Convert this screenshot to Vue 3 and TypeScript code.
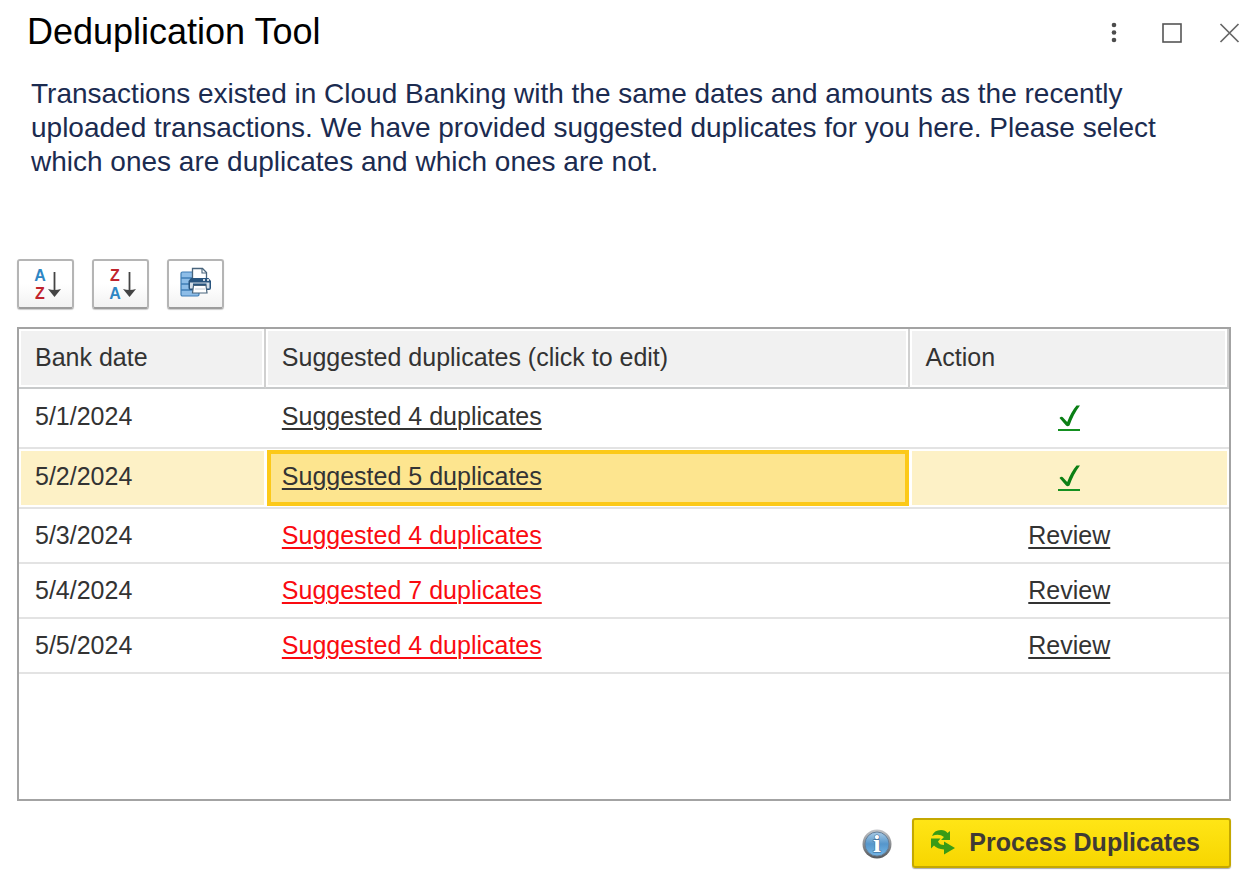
<script setup lang="ts">
import { ref } from 'vue'

interface Row {
  date: string
  count: number
  reviewed: boolean
}

const rows = ref<Row[]>([
  { date: '5/1/2024', count: 4, reviewed: true },
  { date: '5/2/2024', count: 5, reviewed: true },
  { date: '5/3/2024', count: 4, reviewed: false },
  { date: '5/4/2024', count: 7, reviewed: false },
  { date: '5/5/2024', count: 4, reviewed: false },
])
const selected = ref('5/2/2024')
</script>

<template>
  <main class="dialog">
    <header class="titlebar">
      <h1>Deduplication Tool</h1>
      <div class="window-controls">
        <button type="button" aria-label="More">
          <svg width="22" height="24" viewBox="0 0 22 24" fill="#4c4c4c">
            <circle cx="11" cy="5" r="2.3" /><circle cx="11" cy="12.500" r="2.3" /><circle cx="11" cy="20" r="2.3" />
          </svg>
        </button>
        <button type="button" aria-label="Maximize">
          <svg width="22" height="24" viewBox="0 0 22 24" fill="none" stroke="#555" stroke-width="1.6">
            <rect x="2" y="4" width="18" height="18" />
          </svg>
        </button>
        <button type="button" aria-label="Close">
          <svg width="22" height="24" viewBox="0 0 22 24" fill="none" stroke="#666" stroke-width="1.7">
            <path d="M1.500 4L19.500 22M19.500 4L1.500 22" />
          </svg>
        </button>
      </div>
    </header>

    <p class="intro">
      Transactions existed in Cloud Banking with the same dates and amounts as the recently
      uploaded transactions. We have provided suggested duplicates for you here. Please select
      which ones are duplicates and which ones are not.
    </p>

    <div class="toolbar">
      <button type="button" aria-label="Sort ascending">
        <svg width="34" height="44" viewBox="0 -4 34 44">
          <text class="letter blue" x="11" y="15" text-anchor="middle">A</text>
          <text class="letter red" x="11" y="33" text-anchor="middle">Z</text>
          <path d="M25.500 6V25" stroke="#444" stroke-width="1.800" />
          <path d="M19 23Q25.500 25 32 23L25.500 31Z" fill="#444" />
        </svg>
      </button>
      <button type="button" aria-label="Sort descending">
        <svg width="34" height="44" viewBox="0 -4 34 44">
          <text class="letter red" x="11" y="15" text-anchor="middle">Z</text>
          <text class="letter blue" x="11" y="33" text-anchor="middle">A</text>
          <path d="M25.500 6V25" stroke="#444" stroke-width="1.800" />
          <path d="M19 23Q25.500 25 32 23L25.500 31Z" fill="#444" />
        </svg>
      </button>
      <button type="button" aria-label="Print list">
        <svg width="34" height="36" viewBox="0 0 34 36">
          <rect x="2" y="6" width="18" height="24" rx="1.500" fill="#8dbde8" stroke="#3f7db5" stroke-width="1.200" />
          <path d="M2 12H20M2 18H20M2 24H20" stroke="#3f7db5" stroke-width="1.600" />
          <path d="M13.500 14V2.500H23.500L27.500 6.500V14Z" fill="#fff" stroke="#48647c" stroke-width="1.300" />
          <path d="M23 2.500V7H27.500" fill="none" stroke="#48647c" stroke-width="1.100" />
          <path d="M12 12H29.500L32 15V22Q32 24 30 24H11.500Q9.500 24 9.500 22V15Z" fill="#28547e" />
          <path d="M11 16.500H30.500V22.500H11Z" fill="#d5dfe8" />
          <path d="M24 14H26M28 14H30" stroke="#fff" stroke-width="1.600" />
          <path d="M14 18.500H27.500" stroke="#28547e" stroke-width="2" />
          <path d="M14.500 19.500H27L28 27H13.500Z" fill="#fff" stroke="#48647c" stroke-width="1.200" />
          <path d="M16 23H26" stroke="#c5cdd4" stroke-width="1" />
        </svg>
      </button>
    </div>

    <section class="grid">
      <table>
        <colgroup>
          <col class="col-date"><col class="col-suggested"><col>
        </colgroup>
        <thead>
          <tr>
            <th scope="col">Bank date</th>
            <th scope="col">Suggested duplicates (click to edit)</th>
            <th scope="col">Action</th>
          </tr>
        </thead>
        <tbody>
          <tr
            v-for="row in rows"
            :key="row.date"
            :class="{ reviewed: row.reviewed, selected: row.date === selected }"
            @click="selected = row.date"
          >
            <td>{{ row.date }}</td>
            <td class="suggested">
              <a href="#" @click.prevent>Suggested {{ row.count }} duplicates</a>
            </td>
            <td class="action">
              <a v-if="row.reviewed" href="#" class="check" aria-label="Reviewed" @click.prevent>
                <svg width="22" height="22" viewBox="0 0 22 22" fill="#0b7f14">
                  <path d="M1.500 13Q3.500 10.500 5.500 13L9.200 17Q13 7 18.500 .5H22Q15.500 9 11.500 20.500Q9.500 22 8 20.500Z" />
                </svg>
              </a>
              <a v-else href="#" @click.prevent>Review</a>
            </td>
          </tr>
        </tbody>
      </table>
    </section>

    <footer class="footer">
      <button type="button" class="info" aria-label="Information">
        <svg width="30" height="32" viewBox="0 0 30 32">
          <defs>
            <linearGradient id="rim" x1="0" y1="0" x2="0" y2="1">
              <stop offset="0" stop-color="#c3c5c8" /><stop offset="1" stop-color="#55585c" />
            </linearGradient>
            <linearGradient id="face" x1="0" y1="0" x2="0" y2="1">
              <stop offset="0" stop-color="#a9cbe6" /><stop offset=".5" stop-color="#5596cb" /><stop offset="1" stop-color="#74b7e8" />
            </linearGradient>
          </defs>
          <circle cx="15" cy="17" r="14.500" fill="url(#rim)" />
          <circle cx="15" cy="17" r="12" fill="url(#face)" stroke="#66809a" />
          <text class="info-letter" x="15" y="25" text-anchor="middle">i</text>
        </svg>
      </button>
      <button type="button" class="process">
        <svg width="26" height="26" viewBox="0 0 26 26" fill="#389b16">
          <path d="M2 7Q4 1 11 1Q15.500 1 17.500 4L20 2V11H11L14 8Q9 4 2 7Z" />
          <path d="M1 9.500H10.500L8 12.500Q9.500 16 14 16V12.500L25 19L14 25.500V20.500Q7 20 4 16.500L1 19.500Z" />
        </svg>
        <span>Process Duplicates</span>
      </button>
    </footer>
  </main>
</template>

<style>
body {
  margin: 0;
  background: #fff;
}
</style>

<style scoped>
.dialog {
  box-sizing: border-box;
  display: flex;
  flex-direction: column;
  min-height: 100vh;
  padding: 8px 26px 9px 17px;
  font-family: "Liberation Sans", Arial, sans-serif;
  font-size: 25px;
  color: #333;
}
button {
  font: inherit;
  color: inherit;
  padding: 0;
  border: 0;
  background: none;
  cursor: pointer;
}
svg {
  display: block;
}
.titlebar {
  display: flex;
  justify-content: space-between;
  align-items: center;
  height: 48px;
  margin-right: -10px;
}
h1 {
  margin: 0 0 0 10px;
  font-size: 36px;
  line-height: 40px;
  font-weight: 400;
  color: #000;
}
.window-controls {
  display: flex;
  gap: 36px;
}
.intro {
  margin: 21px 0 0 14px;
  max-width: 1140px;
  font-size: 28px;
  line-height: 34px;
  color: #1b2b50;
}
.toolbar {
  display: flex;
  gap: 18px;
  margin: 80px 0 18px;
}
.toolbar button {
  box-sizing: border-box;
  display: grid;
  place-items: center;
  width: 57px;
  height: 50px;
  border: 2px solid #b5b5b5;
  border-bottom-color: #9c9c9c;
  border-radius: 3px;
  background: linear-gradient(#fff 50%, #f2f2f2);
  box-shadow: 0 1px 1px #ccc;
}
.letter {
  font: 700 16px "Liberation Sans", sans-serif;
}
.blue {
  fill: #2e86c4;
}
.red {
  fill: #c0232c;
}
.grid {
  flex: 1;
  border: 2px solid #a3a3a3;
}
table {
  width: 100%;
  table-layout: fixed;
  border-collapse: separate;
  border-spacing: 0;
}
.col-date {
  width: 20.4%;
}
.col-suggested {
  width: 53.2%;
}
th {
  box-sizing: border-box;
  height: 60px;
  padding: 0 16px 2px;
  text-align: left;
  font-weight: 400;
  background: #f1f1f1;
  border-right: 2px solid #d0d0d0;
  border-bottom: 2px solid #c8cacb;
  box-shadow: inset 0 0 0 2px #fff;
}
td {
  box-sizing: border-box;
  height: 55px;
  padding: 0 16px;
  border-bottom: 2px solid #e3e3e3;
}
.reviewed td {
  height: 60px;
  padding-bottom: 3px;
}
.selected td {
  background: #fdf1c6;
  box-shadow: inset 0 0 0 2px #fff;
}
.selected .suggested {
  background: #fde58f;
  box-shadow: inset 0 0 0 1px #fff, inset 0 0 0 5px #fcc919;
}
td a {
  color: #333;
  text-decoration: underline;
  text-decoration-thickness: 2px;
  text-underline-offset: 3px;
}
.suggested a {
  color: #fa0a10;
}
.reviewed .suggested a {
  color: #333;
}
.action {
  text-align: center;
}
.check {
  display: inline-block;
  padding-bottom: 2px;
  border-bottom: 2px solid #159020;
  vertical-align: middle;
}
.footer {
  display: flex;
  justify-content: flex-end;
  align-items: center;
  gap: 20px;
  margin-top: 17px;
}
.process {
  box-sizing: border-box;
  display: flex;
  align-items: center;
  gap: 13px;
  height: 50px;
  padding: 0 29px 2px 16px;
  border: 2px solid #c4a800;
  border-radius: 3px;
  background: linear-gradient(#ffe516, #f7d600);
  box-shadow: 0 1px 1px #aaa;
  font-weight: 700;
  color: #403a35;
}
.info-letter {
  font: 700 22px "DejaVu Serif", serif;
  fill: #fff;
  stroke: #34638f;
  stroke-width: 1px;
  paint-order: stroke;
}
</style>
